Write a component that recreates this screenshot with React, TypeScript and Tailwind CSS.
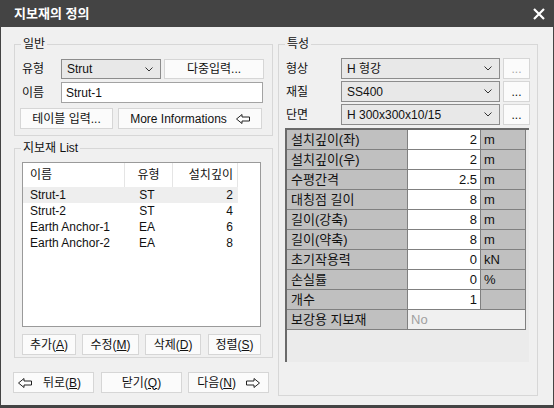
import React from 'react';

const FONT = "font-['Liberation_Sans','Noto_Sans_CJK_KR',sans-serif]";

function Chevron() {
  return (
    <svg width="8" height="5" viewBox="0 0 8 5" className="shrink-0">
      <path d="M0.5 0.5 L4 4 L7.5 0.5" fill="none" stroke="#333" strokeWidth="1" />
    </svg>
  );
}

function Arrow({ dir }: { dir: 'left' | 'right' }) {
  const pts = dir === 'left' ? '0.5,5 6,0.5 6,3 13.5,3 13.5,7 6,7 6,9.5' : '13.5,5 8,0.5 8,3 0.5,3 0.5,7 8,7 8,9.5';
  return (
    <svg width="14" height="10" viewBox="0 0 14 10" className="shrink-0">
      <polygon points={pts} fill="#fff" stroke="#222" strokeWidth="1" strokeLinejoin="miter" />
    </svg>
  );
}

function Combo({ value, className }: { value: string; className: string }) {
  return (
    <div className={`flex items-center justify-between border border-[#8c8c8c] bg-[#e8e8e8] pl-[5px] pr-[7px] ${className}`}>
      <span>{value}</span>
      <Chevron />
    </div>
  );
}

function Btn({ children, className = '' }: { children: React.ReactNode; className?: string }) {
  return (
    <div className={`flex items-center justify-center border border-[#d6d6d6] bg-[#fbfbfb] ${className}`}>{children}</div>
  );
}

function Group({ title, className, children }: { title: string; className: string; children: React.ReactNode }) {
  return (
    <div className={`relative border border-[#d7d7d7] ${className}`}>
      <span className="absolute -top-[8px] left-[6px] bg-[#f0f0f0] px-[2px] leading-[14px]">{title}</span>
      {children}
    </div>
  );
}

const LIST = [
  { name: 'Strut-1', type: 'ST', depth: '2', sel: true },
  { name: 'Strut-2', type: 'ST', depth: '4' },
  { name: 'Earth Anchor-1', type: 'EA', depth: '6' },
  { name: 'Earth Anchor-2', type: 'EA', depth: '8' },
];

const PROPS = [
  { label: '설치깊이(좌)', value: '2', unit: 'm' },
  { label: '설치깊이(우)', value: '2', unit: 'm' },
  { label: '수평간격', value: '2.5', unit: 'm' },
  { label: '대칭점 길이', value: '8', unit: 'm' },
  { label: '길이(강축)', value: '8', unit: 'm' },
  { label: '길이(약축)', value: '8', unit: 'm' },
  { label: '초기작용력', value: '0', unit: 'kN' },
  { label: '손실률', value: '0', unit: '%' },
  { label: '개수', value: '1', unit: '' },
];

export default function App() {
  return (
    <div className={`w-[554px] h-[408px] bg-[#444444] flex flex-col text-[12px] leading-[14px] text-[#111] ${FONT}`}>
      {/* Title bar */}
      <div className="h-[27px] flex items-center justify-between pl-[14px] pr-[9px] text-white">
        <span className="text-[13px] font-bold">지보재의 정의</span>
        <svg width="12" height="12" viewBox="0 0 12 12">
          <path d="M1 1 L11 11 M11 1 L1 11" stroke="#fff" strokeWidth="2.2" />
        </svg>
      </div>

      {/* Body */}
      <div className="flex-1 mx-px mb-[3px] bg-[#f0f0f0] flex pt-[17px] pl-[13px]">
        {/* Left column */}
        <div className="w-[259px] flex flex-col">
          <Group title="일반" className="h-[92px] pt-[14px] pl-[7px]">
            <div className="flex items-center">
              <span className="w-[39px]">유형</span>
              <Combo value="Strut" className="w-[100px] h-[20px]" />
              <Btn className="w-[100px] h-[20px] ml-[3px]">다중입력...</Btn>
            </div>
            <div className="flex items-center mt-[3px]">
              <span className="w-[39px]">이름</span>
              <div className="w-[202px] h-[21px] border border-[#a3a3a3] bg-white pl-[4px] flex items-center">Strut-1</div>
            </div>
            <div className="flex items-center mt-[5px] -ml-[2px]">
              <Btn className="w-[93px] h-[21px]">테이블 입력...</Btn>
              <Btn className="w-[144px] h-[21px] ml-[5px] gap-[9px]">
                <span>More Informations</span>
                <Arrow dir="left" />
              </Btn>
            </div>
          </Group>

          <Group title="지보재 List" className="mt-[12px] h-[210px] pt-[13px] pl-[7px]">
            <div className="w-[239px] h-[165px] border border-[#9a9a9a] bg-white">
              <div className="flex h-[24px] items-center">
                <span className="w-[102px] pl-[7px] border-r border-[#e5e5e5] h-full flex items-center">이름</span>
                <span className="w-[48px] border-r border-[#e5e5e5] h-full flex items-center justify-center">유형</span>
                <span className="w-[65px] border-r border-[#e5e5e5] h-full flex items-center justify-end pr-[4px]">설치깊이</span>
              </div>
              {LIST.map((r) => (
                <div key={r.name} className={`flex h-[16px] items-center w-[215px] ${r.sel ? 'bg-[#eeeeee]' : ''}`}>
                  <span className="w-[102px] pl-[7px]">{r.name}</span>
                  <span className="w-[48px] text-center pr-[4px]">{r.type}</span>
                  <span className="w-[65px] text-right pr-[5px]">{r.depth}</span>
                </div>
              ))}
            </div>
            <div className="flex items-center mt-[7px]">
              <Btn className="w-[54px] h-[21px]">추가(<u>A</u>)</Btn>
              <Btn className="w-[57px] h-[21px] ml-[6px]">수정(<u>M</u>)</Btn>
              <Btn className="w-[56px] h-[21px] ml-[6px]">삭제(<u>D</u>)</Btn>
              <Btn className="w-[53px] h-[21px] ml-[7px]">정렬(<u>S</u>)</Btn>
            </div>
          </Group>

          <div className="flex items-center mt-[14px] -ml-px">
            <Btn className="w-[81px] h-[21px] !justify-start pl-[4px] gap-[11px]">
              <Arrow dir="left" />
              <span>뒤로(<u>B</u>)</span>
            </Btn>
            <Btn className="w-[81px] h-[21px] ml-[7px]">닫기(<u>Q</u>)</Btn>
            <Btn className="w-[81px] h-[21px] ml-[6px] gap-[10px]">
              <span>다음(<u>N</u>)</span>
              <Arrow dir="right" />
            </Btn>
          </div>
        </div>

        {/* Right column */}
        <Group title="특성" className="ml-[5px] w-[260px] h-[352px] pt-[13px] pl-[7px]">
          {[
            { label: '형상', value: 'H 형강', disabled: true },
            { label: '재질', value: 'SS400' },
            { label: '단면', value: 'H 300x300x10/15' },
          ].map((r, i) => (
            <div key={r.label} className={`flex items-center ${i > 0 ? 'mt-[2px]' : ''}`}>
              <span className="w-[55px]">{r.label}</span>
              <Combo value={r.value} className="w-[159px] h-[21px]" />
              <Btn className={`w-[27px] h-[21px] ml-[3px] ${r.disabled ? 'text-[#a8a8a8] bg-[#f4f4f4]' : ''}`}>...</Btn>
            </div>
          ))}

          <div className="mt-[3px] -ml-px w-[244px] h-[234px] border-l-2 border-t-2 border-[#6a6a6a] bg-[#ebebeb]">
            <div className="grid grid-cols-[120px_72px_44px] gap-px bg-[#808080] border-r border-b border-[#808080] w-fit text-[13px] leading-[19px]">
              {PROPS.map((p) => (
                <React.Fragment key={p.label}>
                  <div className="h-[19px] bg-[#c0c0c0] pl-[4px]">{p.label}</div>
                  <div className="h-[19px] bg-white text-right pr-[3px]">{p.value}</div>
                  <div className="h-[19px] bg-[#c0c0c0] pl-[3px]">{p.unit}</div>
                </React.Fragment>
              ))}
              <div className="h-[19px] bg-[#c0c0c0] pl-[4px]">보강용 지보재</div>
              <div className="h-[19px] bg-[#f0f0f0] col-span-2 pl-[3px] text-[#a0a0a0]">No</div>
            </div>
          </div>
        </Group>
      </div>
    </div>
  );
}
